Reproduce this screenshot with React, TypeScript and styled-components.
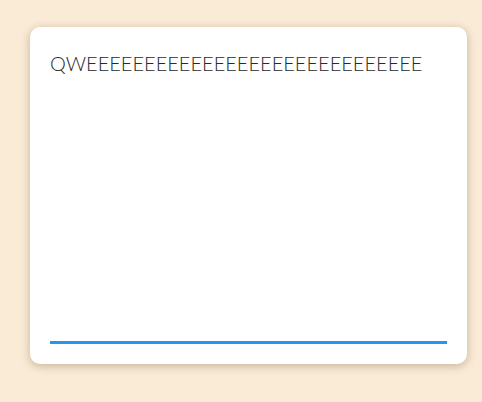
import React from "react";
import styled, { createGlobalStyle } from "styled-components";

const Global = createGlobalStyle`
  html, body { margin: 0; padding: 0; }
  body { background: #faebd7; font-family: Lato, "Noto Sans", sans-serif; }
`;

const Page = styled.div`
  padding: 27px 15px 38px 30px;
`;

const Card = styled.div`
  background: #ffffff;
  border-radius: 10px;
  box-shadow: 0 2px 10px rgba(120, 90, 50, 0.4);
  padding: 24px 20px 20px;
  height: 337px;
  box-sizing: border-box;
  display: flex;
  flex-direction: column;
`;

const Field = styled.textarea`
  flex: 1;
  border: none;
  border-bottom: 3px solid #2196f3;
  outline: none;
  resize: none;
  padding: 0;
  margin: 0;
  font-family: Lato, sans-serif;
  font-weight: 300;
  font-size: 20px;
  color: #2a2a2a;
  background: transparent;
  overflow: hidden;
`;

export default function App() {
  return (
    <>
      <Global />
      <Page>
        <Card>
          <Field defaultValue="QWEEEEEEEEEEEEEEEEEEEEEEEEEEEEE" />
        </Card>
      </Page>
    </>
  );
}
